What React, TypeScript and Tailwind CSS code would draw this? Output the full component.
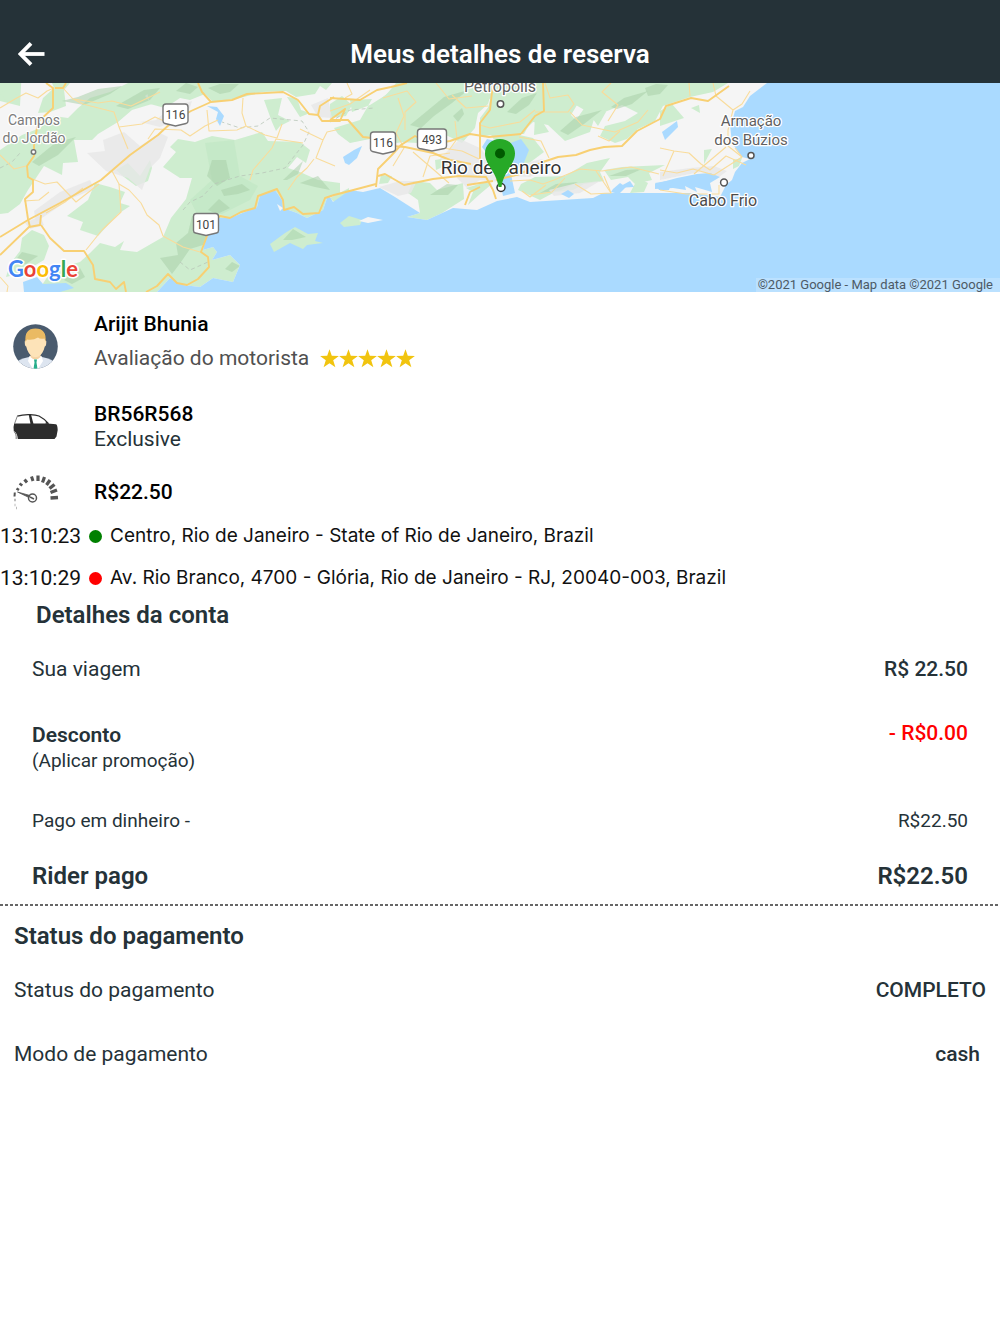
import type { ReactNode } from "react";

const stops = [
  { time: "13:10:23", dot: "bg-[#008000]", address: "Centro, Rio de Janeiro - State of Rio de Janeiro, Brazil" },
  { time: "13:10:29", dot: "bg-[#ff0000]", address: "Av. Rio Branco, 4700 - Glória, Rio de Janeiro - RJ, 20040-003, Brazil" },
];

const forests = [
  "0,83 22,68 20,106 0,101",
  "0,93 12,88 20,101 8,103",
  "52,83 70,83 64,90 66,106 50,112 38,113 43,98 54,88",
  "78,108 90,98 110,92 128,83 332,83 326,90 320,86 315,94 296,97 286,91 262,92 240,98 213,102 205,94 190,100 180,98 165,108 150,104 146,88 141,83 150,92 145,96 152,104 132,110 118,122 98,134 92,140 74,140 78,162 63,163 62,175 44,166 28,190 20,204 8,213 0,214 0,150 22,135 40,128 54,116 68,118",
  "163,167 176,152 170,147 178,139 195,142 212,136 235,140 262,132 268,141 300,142 310,150 306,163 297,157 288,168 300,172 318,180 340,183 340,193 327,198 323,210 307,218 297,213 283,208 282,200 275,190 260,195 257,207 230,218 213,218 207,233 203,250 213,247 217,252 212,260 230,255 240,265 233,282 213,278 200,287 183,285 170,278 157,292 35,292 42,285 52,270 80,262 90,253 100,243 115,247 124,241 120,250 137,252 163,237 171,218 186,199 192,178 180,178",
  "264,100 282,98 278,115 290,121 280,126 276,131 272,122",
  "287,97 297,98 301,110 310,113 300,117",
  "95,183 110,187 125,192 120,203 130,206 118,214 98,236 80,230 83,222 67,216 88,200",
  "116,170 128,163 140,176 150,160 152,168 148,181 136,186 124,177",
  "22,238 32,230 44,235 49,246 44,260 22,273 6,277 10,264 20,251",
  "330,104 342,96 352,105 346,116 330,118",
  "334,128 360,120 372,99 350,100 352,112 370,105 386,95 396,83 494,83 488,104 478,113 475,128 462,143 448,136 430,128 418,143 398,142 382,150 370,139 350,143 338,134",
  "377,102 400,83 536,83 535,114 524,134 496,134 480,137 480,118 496,97 472,104 450,121 430,137 412,140 397,143 398,130 378,129",
  "490,100 500,83 592,83 580,100 571,115 576,120 590,100 592,88 612,83 728,83 713,92 690,97 663,106 655,121 638,129 627,139 615,143 600,136 605,126 625,121 638,113 622,105 595,116 590,132 565,141 548,125 533,122 515,140 482,133",
  "490,133 515,134 533,138 544,152 528,164 512,170 500,150",
  "536,96 590,83 612,83 600,100 606,112 598,126 588,112 574,104 560,106 540,118 549,132 534,135",
  "660,111 672,104 684,118 660,126",
  "691,108 699,105 700,113",
  "704,150 712,149 704,164",
  "334,202 349,195 349,188 330,198",
  "413,181 430,183 437,190 463,183 464,199 442,213 427,220 407,217 420,213 418,200 408,193",
  "466,188 486,182 492,184 480,194 468,205 473,192",
  "521,184 535,177 565,176 587,163 610,158 600,172 604,181 584,184 573,190 555,192 540,200 518,190",
  "604,170 622,167 665,165 649,173 652,180 635,184 628,177 611,180",
  "638,178 648,183 644,192 630,193",
  "435,160 448,158 447,165 436,170",
  "381,175 392,176 388,183 379,184",
];

const ridges = [
  "62,101 78,97 98,89 122,86 110,94 84,105",
  "116,106 144,90 160,88 150,100 128,109",
  "32,162 55,143 76,137 58,155 39,166",
  "176,91 186,83 198,87 190,94",
  "208,88 220,84 239,84 230,92 220,94",
  "160,258 178,255 176,243 188,233 192,216 214,221 203,245 190,249 181,262 172,274",
  "212,160 226,160 230,178 217,186 207,176",
  "221,190 242,184 250,190 238,194 224,196",
  "283,180 303,161 298,174 287,180",
  "300,183 318,176 330,190 315,187",
  "208,210 219,199 230,208 217,214",
  "410,125 444,97 468,90 452,103 434,116 421,128",
  "453,116 462,108 464,114 458,122",
  "507,112 522,98 537,93 529,105 516,114",
  "560,131 576,117 602,110 584,124 568,135",
  "611,107 624,98 648,91 632,104 617,109",
  "645,88 656,84 668,85 660,94 648,96",
  "430,195 447,184 458,185 448,195",
  "540,193 556,184 578,182 561,190",
  "609,176 626,170 642,169 626,176",
  "225,269 232,262 240,266 232,272",
  "64,280 80,268 85,277 72,284",
  "14,262 22,252 38,256 26,264",
];

const towns = [
  "87,153 105,151 103,140 124,132 140,146 160,133 168,137 160,158 150,168 142,190 128,178 106,171",
  "34,211 60,192 90,180 94,189 70,199 48,214 36,222",
  "140,122 156,120 170,108 192,101 188,114 160,127",
  "440,158 460,139 480,148 490,160 500,182 480,180 467,188 449,170",
  "510,167 542,159 550,165 530,177 511,176",
  "379,187 400,181 417,181 411,193 398,196",
  "549,190 573,184 600,181 580,193 554,196",
  "660,172 690,168 714,166 727,171 719,177 700,172 670,178 660,180",
  "311,105 328,98 332,118 318,117",
  "25,223 40,216 44,225 30,229",
];

const minorRoads = [
  "M0 108L15 99L26 93L38 98L47 91L54 88",
  "M62 87L73 99L83 104L114 112L119 127L128 149",
  "M74 99L98 103L112 101L131 106L160 92",
  "M119 127L142 124L155 117L164 121L180 107",
  "M148 139L155 129L181 130L190 136L205 126L218 120",
  "M0 155L14 169L26 166M30 178L45 184L57 182L76 202L99 184",
  "M24 201L39 200L49 192M46 213L65 202L83 188",
  "M112 171L119 184L129 190L141 203L147 215L159 225L163 236L183 247L200 252",
  "M119 184L121 212L102 230L86 250",
  "M8 286L0 277M8 286L7 292",
  "M207 110L209 131L237 130L246 126L265 135L277 138L282 124M243 98L242 113L246 126",
  "M300 129L323 140L327 132L340 129M323 140L316 158L335 166",
  "M250 180L253 170L272 148L276 139L303 143",
  "M288 190L297 177L307 168L314 159",
  "M345 98L352 94L347 83M330 111L350 104L370 90",
  "M398 98L404 116L396 133L404 148L393 166",
  "M383 98L407 91L416 102L405 112L405 130",
  "M455 121L457 139L449 150M413 152L434 170L449 183",
  "M430 146L462 151L479 159M423 177L430 156L450 153",
  "M480 125L490 128L520 122L535 110",
  "M535 112L568 112L574 104L568 95L550 98L545 83",
  "M570 112L582 125L615 132L638 122L648 110",
  "M598 136L609 141L620 131M608 121L618 105L602 92L611 83",
  "M519 137L541 141L549 158M510 170L530 174L544 166",
  "M510 181L530 180L543 184L554 180L580 169L602 171L631 167L659 174",
  "M575 184L591 194L611 193L604 176M546 185L530 197L522 191",
  "M565 178L552 192L531 195M596 171L611 193",
  "M660 148L674 151L689 153L701 164L710 170L726 156L746 165",
  "M674 151L663 176M660 170L677 173L693 169L714 175L742 157L735 148",
  "M750 91L742 104L733 110L716 96L713 83M733 110L728 130L728 146L742 157",
  "M660 190L686 194L719 194L719 185",
  "M694 174L726 147M689 83L690 96",
  "M452 95L466 108L488 106M436 83L449 99L472 96",
];

const majorRoads = [
  "M46 83L53 88L53 108L38 122L34 145L34 156L27 166L28 177L33 180L33 192L25 199L28 219L30 227",
  "M55 88L63 88L66 83",
  "M0 237L28 220L60 203L101 180L130 155L158 135L172 122L191 111L211 102L232 100L247 94L283 92L298 100L309 114L318 115L320 106L334 97",
  "M0 255L29 227L40 225L41 215M41 225L50 238L64 251L84 251L93 265L95 279L110 282L116 289L124 282L126 292",
  "M198 83L202 92L211 102",
  "M146 292L157 286L168 274L177 283L187 285L198 279L209 267L208 257L201 252L207 236L212 223L220 216L230 218L241 212L255 208L258 196L277 189L283 200L284 210L294 207L303 214L319 213L325 198L334 195L342 193L376 184",
  "M318 115L322 121L340 121L345 109L330 120M330 98L360 100L377 90L391 87L407 83",
  "M331 120L348 120L363 137L381 139L392 146L405 147L433 153L450 160L471 164",
  "M376 187L378 169L391 156L401 145L415 136L432 144L450 141L470 134L489 137L521 134",
  "M378 176L385 174L404 185L433 179L459 176L486 177L493 190L496 199",
  "M480 187L470 192L465 205M493 181L467 185",
  "M480 170L480 123L490 110L493 83",
  "M521 134L535 116L544 111L543 83",
  "M496 180L520 174L540 163L558 157L576 155L590 150L604 147L622 146L637 131L660 119L666 106L691 98L708 101L729 86",
];

const lakes = [
  "207,106 217,107 224,116 220,126 216,119 218,112",
  "482,147 487,139 508,144 521,139 529,150 523,165 512,170 507,162 492,160",
  "496,169 510,170 512,179 515,193 503,196 500,182",
  "343,157 354,150 362,146 357,158 349,165 345,163",
  "662,132 677,121 678,127 665,140",
  "613,189 620,183 626,187 619,194 611,192",
  "561,194 568,190 574,194 569,198",
  "617,188 630,181 634,187",
  "655,183 673,180 669,190 659,190",
  "23,282 37,277 43,284 66,283 74,288 60,292 24,292",
];

const Shield = ({ x, y, w = 25, label }: { x: number; y: number; w?: number; label: string }) => (
  <g>
    <path
      d={`M${x - w / 2 + 3} ${y - 11}H${x + w / 2 - 3}q3 0 3 3V${y + 6}q0 2 -2 2.500L${x} ${y + 11}L${x - w / 2 + 2} ${y + 8.5}q-2 -.5 -2 -2.500V${y - 8}q0 -3 3 -3Z`}
      fill="#fff"
      stroke="#777"
      strokeWidth="1.4"
    />
    <text x={x} y={y + 4} textAnchor="middle" fontSize="12" fill="#444">
      {label}
    </text>
  </g>
);

const RouteMap = () => (
  <svg
    viewBox="0 83 1000 209"
    preserveAspectRatio="xMidYMid slice"
    className="block h-[209px] w-full font-[Roboto,sans-serif]"
    role="img"
    aria-label="Mapa do Rio de Janeiro"
  >
    <rect y="83" width="1000" height="209" fill="#f5f5f5" />
    {forests.map((p, i) => (
      <polygon key={i} points={p} fill="#ceedcf" />
    ))}
    <polygon points="205,143 234,140 240,176 258,186 250,200 222,214 196,212 190,200 212,180" fill="#bfe6c3" fillOpacity=".6" />
    <g fill="#a9cfaa" fillOpacity=".55">
      {ridges.map((p, i) => (
        <polygon key={i} points={p} />
      ))}
    </g>
    <g fill="#e7e7e7" fillOpacity=".8">
      {towns.map((p, i) => (
        <polygon key={i} points={p} />
      ))}
    </g>
    {/* ocean */}
    <path
      fill="#aadaff"
      d="M767 83L750 96L743 107L735 111L733 118L730 125L732 143L742 157L750 159L742 163L735 172L732 180L726 185L720 197L693 193L660 193L603 193L593 198L530 202L517 197L497 201L477 210L453 208L427 220L407 217L420 213L395 197L380 188L363 192L350 190L333 202L330 197L327 198L323 210L307 218L297 213L283 208L282 200L275 190L260 195L257 207L230 218L213 218L207 233L203 250L213 247L217 252L212 260L230 255L240 265L233 282L213 278L200 287L183 285L170 278L157 292H1000V83Z"
    />
    <path
      fill="#aadaff"
      d="M655 184L677 178L697 174L710 173L720 177L710 183L712 192L695 187L697 192L685 186L686 190L673 188L655 189Z"
    />
    {lakes.map((p, i) => (
      <polygon key={i} points={p} fill="#aadaff" />
    ))}
    <polygon points="277,204 283,208 280,211" fill="#f5f5f5" />
    <polygon points="270,244 285,233 295,227 308,234 318,233 315,241 323,243 307,245 303,249 290,243 274,252" fill="#ceedcf" />
    <polygon points="283,240 293,229 306,237 292,240" fill="#b9dfbb" />
    <polygon points="340,223 349,216 362,220 360,225 344,227" fill="#ceedcf" />
    <polygon points="359,221 368,217 383,220 368,223" fill="#f5f5f5" />
    <polygon points="733,160 742,158 739,166 733,169" fill="#ceedcf" />

    <g fill="none" stroke="#b9c6b9" strokeWidth=".8" strokeDasharray="4 3">
      <path d="M183 210L190 202L203 196L214 184L240 176L262 173L285 168L303 145L309 132L302 121L270 118L258 126L240 128L222 122" />
      <path d="M0 168L12 162L20 153M180 262L190 270L208 262M330 122L350 110L374 108" />
    </g>
    <g fill="none" stroke="#f9dc9b" strokeWidth="1.1" strokeLinejoin="round">
      {minorRoads.map((d, i) => (
        <path key={i} d={d} />
      ))}
    </g>
    <g fill="none" stroke="#f8d073" strokeWidth="1.9" strokeLinejoin="round">
      {majorRoads.map((d, i) => (
        <path key={i} d={d} />
      ))}
    </g>

    <Shield x={175.5} y={115} label="116" />
    <Shield x={383} y={143} label="116" />
    <Shield x={432} y={140} w={29} label="493" />
    <Shield x={206} y={224.500} label="101" />

    <g fill="#fff" stroke="#555" strokeWidth="1.5">
      <circle cx="33.500" cy="152" r="2.200" stroke="#777" />
      <circle cx="500.500" cy="104" r="3.200" />
      <circle cx="501" cy="187.500" r="4" stroke="#333" />
      <circle cx="751" cy="155.500" r="3" />
      <circle cx="724" cy="182.500" r="3.400" />
    </g>

    <g textAnchor="middle" stroke="#fff" strokeWidth="2.500" strokeLinejoin="round" paintOrder="stroke">
      <g fontSize="14" fill="#7b7b7b">
        <text x="34" y="125">Campos</text>
        <text x="34" y="143">do Jordão</text>
      </g>
      <g fontSize="15" fill="#5f5f5f">
        <text x="500" y="92" fontSize="16">Petrópolis</text>
        <text x="751" y="126">Armação</text>
        <text x="751" y="145">dos Búzios</text>
      </g>
      <text x="723" y="206" fontSize="16" fill="#4b4b4b">Cabo Frio</text>
      <text x="501" y="174" fontSize="19" fill="#333">Rio de Janeiro</text>
    </g>

    <path d="M500 139C491 139 485 145.500 485 153.500C485 165 496.500 171 498.500 187H501.500C503.500 171 515 165 515 153.500C515 145.500 509 139 500 139Z" fill="#27a927" />
    <circle cx="500" cy="153.500" r="5" fill="#005a00" />

    <text x="8" y="277" fontSize="22" className="font-[Lato,sans-serif] font-bold" stroke="#fff" strokeWidth="3" strokeLinejoin="round" paintOrder="stroke">
      <tspan fill="#4285f4">G</tspan>
      <tspan fill="#ea4335">o</tspan>
      <tspan fill="#fbbc05">o</tspan>
      <tspan fill="#4285f4">g</tspan>
      <tspan fill="#34a853">l</tspan>
      <tspan fill="#ea4335">e</tspan>
    </text>
    <rect x="756" y="278" width="244" height="14" fill="#fff" fillOpacity=".2" />
    <text x="993" y="289" textAnchor="end" fontSize="13" fill="#4d5a66">
      ©2021 Google - Map data ©2021 Google
    </text>
  </svg>
);

const BackArrow = () => (
  <svg width="28" height="26" viewBox="0 0 28 26" fill="none" stroke="#fff" strokeWidth="3.800" aria-hidden="true">
    <path d="M4 13H26.500" />
    <path d="M13 2.300L2.500 13L13 23.700" strokeLinejoin="miter" />
  </svg>
);

const Avatar = () => (
  <svg width="45" height="45" viewBox="0 0 45 45" aria-hidden="true">
    <clipPath id="face">
      <circle cx="22.500" cy="22.500" r="22.300" />
    </clipPath>
    <g clipPath="url(#face)">
      <rect width="45" height="45" fill="#4a5b6e" />
      <path d="M2 45V40Q5 35 16 33H29Q40 35 43 40V45Z" fill="#dde5f0" />
      <path d="M16.500 32L15 37L20 45H25L30 37L28.500 32Z" fill="#fff" />
      <path d="M17.500 28H27.500V33Q22.500 38 17.500 33Z" fill="#f5d3a3" />
      <path d="M13 16V12H32V16L33.300 17Q33.500 22 31.800 22.500Q30 30 25.500 32.500Q22.500 34 19.500 32.500Q15 30 13.200 22.500Q11.500 22 11.800 17Z" fill="#fde3b8" />
      <path d="M12.500 18Q11 4.500 22.500 4.500Q34 4.500 32.500 18L31.500 14.500Q27 15.500 25 13.500Q20 16.500 14 15.500Z" fill="#eaba63" />
      <path d="M21 35.500H24L23.500 38.500L24.500 45H20.500L21.500 38.500Z" fill="#27ae8c" />
    </g>
  </svg>
);

const Car = () => (
  <svg width="45" height="28" viewBox="0 0 45 28" aria-hidden="true">
    <path
      fill="#2d2d2d"
      d="M1.200 10.500H34.500L43 11.300Q44.500 12 44.700 17L43.500 23.500L41.500 26H4.800Q4.500 20 .8 18Q0 14 1.200 10.500Z"
    />
    <path d="M4.300 3.200Q10 1.300 17 1.600Q23 1.800 26 3Q31 5.500 35.500 10.700" stroke="#2d2d2d" strokeWidth="1.300" fill="none" />
    <path d="M4.300 3.200L1.500 10.800" stroke="#666" strokeWidth=".8" fill="none" />
    <path d="M15.700 1.600H18L20.500 11H17.500Z" fill="#2d2d2d" />
    <path d="M32.500 10.800L33 8.500L35.500 10.800Z" fill="#2d2d2d" />
    <path d="M.8 18.500Q3.500 20 3.200 26" stroke="#777" fill="none" strokeWidth="1" />
  </svg>
);

const Gauge = () => (
  <svg width="46" height="36" viewBox="0 0 46 36" fill="none" stroke="#555" aria-hidden="true">
    <path d="M1.500 22.500L1.800 18.500" strokeWidth="2" />
    <path d="M1 26L3 26M1.500 31H2.500M3 34H4" strokeWidth="2.500" stroke="#bbb" />
    <path d="M3.500 14.500L6 16M6.500 9.500L9.300 11.500" strokeWidth="2.500" />
    <path d="M11.500 5.500L14 8.500M18.500 2.500L20 7" strokeWidth="3" />
    <path d="M25 1.500V7M31.500 3L29.500 8.500M37 6L33.500 11" strokeWidth="3.200" />
    <path d="M41.500 10.500L36.500 14.500M44 16L37.500 18.500M45 23.500L37.500 24" strokeWidth="3.400" />
    <path d="M4.500 18L17 21.500L16 23.500Z" fill="#555" strokeWidth=".8" />
    <circle cx="19.500" cy="24" r="4" strokeWidth="1.500" />
    <path d="M17 23L21 25" strokeWidth="1.500" />
  </svg>
);

const Star = () => (
  <svg width="19" height="19" viewBox="0 0 19 19" aria-hidden="true">
    <path d="M9.500 .2L11.800 6.800L18.900 7L13.200 11.300L15.400 18.300L9.500 14.200L3.600 18.300L5.800 11.300L.1 7L7.200 6.800Z" fill="#f1c40f" />
  </svg>
);

const InfoRow = ({ icon, children }: { icon: ReactNode; children: ReactNode }) => (
  <div className="flex items-center">
    <div className="flex w-[94px] shrink-0 pl-[13px]">{icon}</div>
    <div>{children}</div>
  </div>
);

const Row = ({ children }: { children: ReactNode }) => (
  <div className="flex items-start justify-between">{children}</div>
);

export default function App() {
  return (
    <div className="min-h-screen bg-white font-[Roboto,sans-serif] text-[21px] leading-7 text-[#253238]">
      <header className="grid grid-cols-[64px_1fr_64px] items-center bg-[#253238] pt-[26px] pb-[2px] text-white">
        <button type="button" aria-label="Voltar" className="flex h-[55px] items-center pl-[18px]">
          <BackArrow />
        </button>
        <h1 className="text-center text-[26px] font-semibold">Meus detalhes de reserva</h1>
      </header>

      <RouteMap />

      <main>
        <section className="flex flex-col pt-[18px]">
          <InfoRow
            icon={
              <div className="pt-[10px]">
                <Avatar />
              </div>
            }
          >
            <p className="font-medium text-black">Arijit Bhunia</p>
            <div className="mt-[6px] flex items-center text-[#505050]">
              <span>Avaliação do motorista</span>
              <span className="ml-[11px] flex" role="img" aria-label="5 estrelas">
                {[1, 2, 3, 4, 5].map((n) => (
                  <Star key={n} />
                ))}
              </span>
            </div>
          </InfoRow>
          <div className="mt-[30px]">
            <InfoRow icon={<Car />}>
              <p className="leading-[25px] font-medium text-black">BR56R568</p>
              <p className="leading-[25px]">Exclusive</p>
            </InfoRow>
          </div>
          <div className="mt-[22px]">
            <InfoRow icon={<Gauge />}>
              <p className="font-medium text-black">R$22.50</p>
            </InfoRow>
          </div>
        </section>

        <ul className="mt-3 flex flex-col gap-[14px] text-[#111]">
          {stops.map((stop) => (
            <li key={stop.time} className="flex items-center">
              <time className="w-[89px]">{stop.time}</time>
              <span className={`mr-2 size-[13px] rounded-full ${stop.dot}`} />
              <span className="font-[Inter,sans-serif] text-[19px]">{stop.address}</span>
            </li>
          ))}
        </ul>

        <section className="px-8 pb-[14px]">
          <h2 className="mt-[9px] pl-1 text-[24px] font-semibold">Detalhes da conta</h2>
          <div className="mt-[26px]">
            <Row>
              <span>Sua viagem</span>
              <span className="font-medium">R$ 22.50</span>
            </Row>
          </div>
          <div className="mt-9">
            <Row>
              <div className="pt-[2px]">
                <p className="font-semibold">Desconto</p>
                <p className="text-[19px] leading-6">(Aplicar promoção)</p>
              </div>
              <span className="font-medium text-[#ff0000]">- R$0.00</span>
            </Row>
          </div>
          <div className="mt-[34px] text-[19px]">
            <Row>
              <span>Pago em dinheiro -</span>
              <span>R$22.50</span>
            </Row>
          </div>
          <div className="mt-[27px] text-[24px] font-semibold">
            <Row>
              <span>Rider pago</span>
              <span>R$22.50</span>
            </Row>
          </div>
        </section>

        <hr className="h-[2px] border-0 bg-[repeating-linear-gradient(90deg,#666_0_3px,#fff_3px_5px)]" />

        <section className="px-[14px] pt-4">
          <h2 className="text-[24px] font-semibold">Status do pagamento</h2>
          <div className="mt-[26px]">
            <Row>
              <span>Status do pagamento</span>
              <span className="font-medium">COMPLETO</span>
            </Row>
          </div>
          <div className="mt-9">
            <Row>
              <span>Modo de pagamento</span>
              <span className="pr-[6px] font-medium">cash</span>
            </Row>
          </div>
        </section>
      </main>
    </div>
  );
}
